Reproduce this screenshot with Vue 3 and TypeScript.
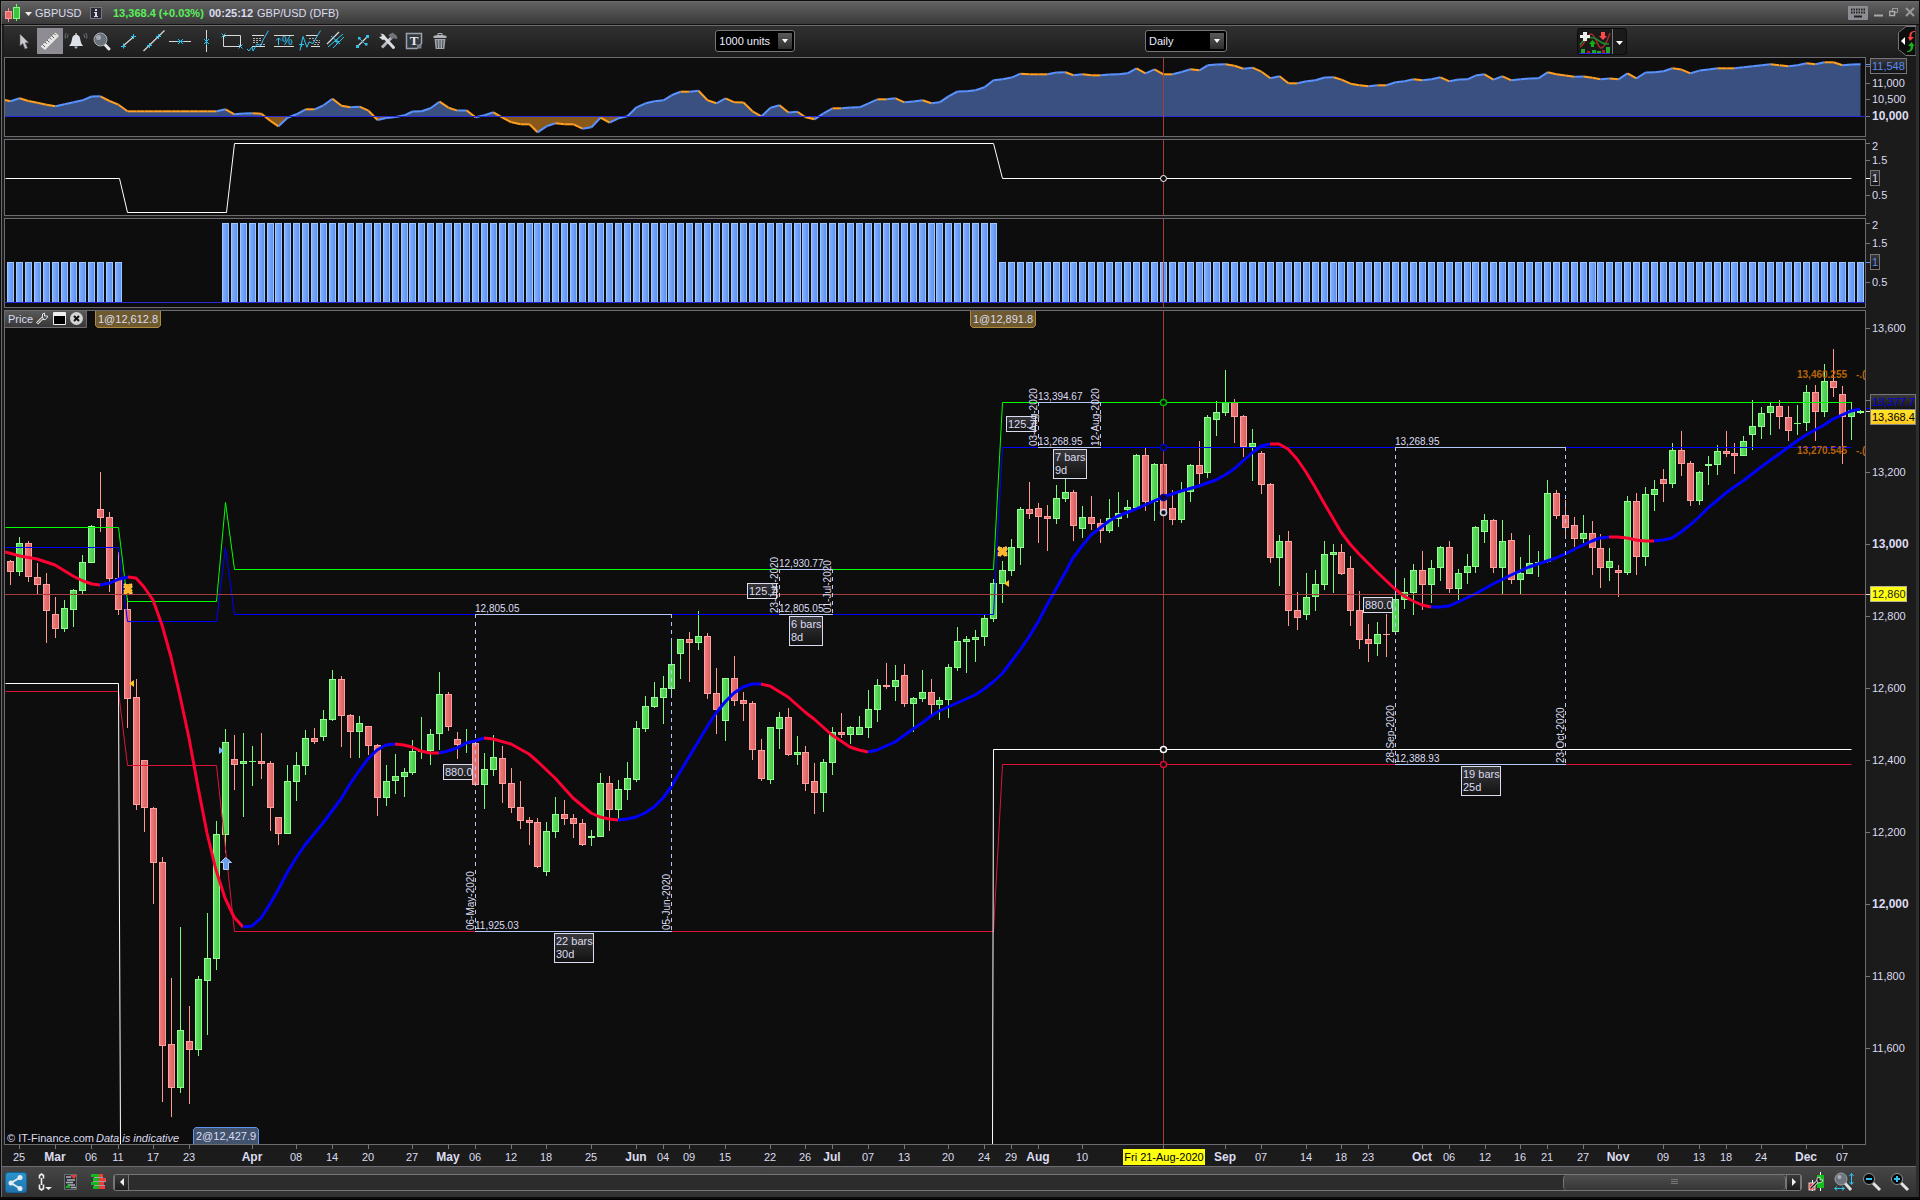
<script setup lang="ts">
type Pt = [number, number]

// Horizontal centre of the bar with the given index.
const barX = (i: number): number => 10.5 + Math.floor(8.9328 * i + 0.959)

const toPoints = (pts: Pt[]): string => pts.map(([x, y]) => `${x + 0.5},${y + 0.5}`).join(' ')

// One entry per session: direction, then high / body top / body bottom / low.
const rawCandles = `R560,561,572,585 G537,543,572,576 R541,543,577,582 R563,577,585,595 R573,584,611,643 R597,614,629,638 G600,608,629,632 G589,590,610,627 G555,562,591,595 G525,526,563,563
R472,509,518,532 R512,517,579,592 R552,578,610,615 R598,609,699,728 R679,697,805,810 R760,760,808,832 R807,808,863,904 R857,862,1046,1102 R978,1044,1088,1117 G927,1030,1088,1093
R1006,1041,1050,1104 G976,979,1050,1056 G913,958,981,1035 G821,834,959,970 G729,742,835,853 R735,759,765,790 G733,761,764,817 G746,761,762,786 R733,761,764,779 R761,763,808,831
R817,817,834,845 G765,781,834,834 G752,765,782,801 G730,738,766,775 R728,738,742,744 G710,719,737,741 G670,679,720,721 R676,679,716,747 R714,715,732,758 G716,723,732,758
R726,726,746,755 R744,745,798,816 G765,781,798,806 G754,776,781,794 G768,772,777,797 G740,751,773,775 G717,751,752,759 G729,734,751,765 G672,694,734,750 R692,694,727,731
R732,739,745,759 G729,743,744,753 R743,743,785,785 G753,769,785,809 G735,757,770,776 R746,758,784,803 R768,783,808,813 R781,807,821,829 R817,820,823,845 R818,822,867,868
G822,831,872,876 G797,814,832,838 R800,814,819,825 R814,818,824,838 R819,823,845,846 G830,836,838,846 G773,783,837,837 R776,783,810,831 G780,789,810,819 G762,778,790,800
G721,728,780,782 G696,706,729,732 G682,697,707,708 G676,688,698,724 G642,664,689,697 G639,639,654,679 R632,639,643,682 G611,636,643,650 R633,636,694,699 R668,693,710,734
G678,678,721,741 R656,678,701,706 R692,700,704,721 R701,703,750,760 R739,750,779,781 G727,727,780,784 G712,717,729,749 R708,717,755,756 G736,752,755,765 R746,752,784,791
R763,781,793,814 G759,762,793,812 G727,732,763,775 R713,732,735,738 G726,727,735,744 G716,727,735,735 G690,709,728,738 G679,685,710,722 R663,685,687,689 G665,680,687,701
R664,675,704,707 G697,698,704,732 G670,692,699,702 R679,692,705,715 G697,700,705,720 G664,667,700,718 G627,641,668,671 G636,639,642,673 G630,637,640,662 G615,618,637,646
G579,583,619,622 G561,570,584,603 G539,547,571,576 G507,509,548,565 R482,509,514,519 R503,508,517,543 R505,516,519,551 G485,498,519,524 G478,492,499,502 R490,492,526,541
G506,517,529,538 R496,517,524,530 R519,523,531,543 G499,518,531,533 G492,513,519,527 G500,507,510,518 G454,455,508,508 R448,455,502,511 G463,464,502,521 R452,464,514,523
R490,508,520,525 G482,491,520,523 G464,465,492,502 R441,465,474,484 G415,417,473,478 G401,412,420,436 G370,402,413,416 R399,402,417,443 R415,416,447,457 G429,443,447,481
R451,453,485,494 R483,484,558,563 G535,541,558,586 R531,541,611,626 R592,610,618,630 G573,597,615,620 G570,584,597,611 G541,554,585,590 G544,552,555,593 R544,552,574,575
R556,568,611,626 R591,610,640,649 R624,639,644,662 G622,634,644,656 R614,634,635,657 G571,599,632,632 G578,592,600,609 G564,570,593,615 R551,570,585,610 G560,568,585,603
G546,547,568,581 R541,547,589,593 G569,573,589,600 G554,566,573,584 G526,527,567,573 G514,520,532,543 R519,520,568,573 G520,541,568,594 R533,540,580,584 G557,573,580,594
G535,563,574,574 G551,562,563,577 G480,493,562,563 R490,493,516,519 R500,515,528,536 R517,525,539,547 G515,533,539,543 R521,533,548,575 R534,548,568,588 G548,561,568,581
R565,570,573,597 G496,501,573,575 R493,501,557,575 G487,494,557,566 G480,489,495,511 R469,479,484,502 G443,450,484,488 R431,450,464,476 R461,463,501,506 G471,472,501,505
G456,464,466,485 G445,451,465,475 R431,451,454,457 R443,453,456,474 G436,441,456,456 G400,426,435,450 G407,413,427,439 G402,406,413,435 R400,406,417,429 R406,417,431,441
G405,423,424,435 G385,392,423,431 R385,392,412,441 G364,381,412,417 R349,381,388,397 R386,394,417,464 G402,410,417,440 G410,411,413,414`

interface Candle { x: number; up: boolean; high: number; top: number; bottom: number; low: number }
const candles: Candle[] = rawCandles.split(/\s+/).map((entry, i) => {
  const [high, top, bottom, low] = entry.slice(1).split(',').map(Number)
  return { x: barX(i), up: entry[0] === 'G', high, top, bottom, low }
})

// Moving average: runs of one trend direction, each continuing from the previous one.
const rawAverage: [string, string][] = [
  ['down', '5,552 20,556 37,559 55,565 73,576 83,581 92,584 100,585'],
  ['up', '100,585 110,583 119,579 128,577'],
  ['down', '128,577 136,578 144,587 153,600 162,625 171,657 180,696 189,738 198,787 207,833 216,870 225,898 234,917 243,927'],
  ['up', '243,927 252,926 261,918 270,904 278,890 287,873 296,858 305,845 323,823 341,799 350,784 359,771 368,759 377,750 386,745 395,744'],
  ['down', '395,744 404,745 412,747 421,751 430,753 439,753'],
  ['up', '439,753 448,751 457,748 466,743 475,741 484,738'],
  ['down', '484,738 493,739 511,744 529,754 537,761 555,778 573,798 591,813 600,817 609,819 618,820'],
  ['up', '618,820 627,819 636,817 645,813 654,807 663,798 671,787 680,772 698,742 707,727 716,713 725,702 734,693 743,687 752,684 761,684'],
  ['down', '761,684 770,686 788,697 805,712 814,719 832,735 850,747 859,750 868,752'],
  ['up', '868,752 877,750 886,746 895,742 913,729 922,723 931,716 939,711 948,707 957,703 966,699 975,695 984,689 993,682 1002,674 1011,662 1020,650 1029,637 1038,622 1047,605 1056,589 1065,573 1073,558 1082,546 1091,535 1100,528 1109,521 1118,516 1136,509 1154,501 1163,497 1181,491 1199,486 1207,483 1216,480 1225,475 1234,469 1243,461 1252,453 1261,446 1270,444'],
  ['down', '1270,444 1279,444 1288,449 1297,459 1306,472 1315,487 1324,503 1341,532 1350,544 1359,554 1377,572 1395,589 1404,596 1413,601 1422,605 1431,607'],
  ['up', '1431,607 1440,607 1449,606 1458,602 1475,594 1493,584 1511,575 1529,567 1538,564 1556,558 1565,554 1583,545 1592,541 1600,538 1609,537'],
  ['down', '1609,537 1618,537 1627,538 1636,540 1645,541 1654,541'],
  ['up', '1654,541 1663,540 1672,538 1681,532 1690,525 1699,517 1708,508 1726,493 1734,487 1743,481 1761,467 1779,454 1797,441 1806,435 1815,430 1824,425 1833,419 1842,415 1851,411 1860,409'],
]
const average = rawAverage.map(([trend, points]) => ({ trend, points }))

// Equity curve, one value per bar; a value that does not rise is drawn in orange.
const equity: number[] = [
  101.3, 98.3, 101, 102.7, 104.7, 106.3, 104.3, 102.3, 100.3, 96.5, 96.3, 101, 104.7,
  111.3, 111.3, 111.3, 111.3, 111.3, 111.3, 111.3, 111.3, 111.3, 111.3, 111.3,
  109.3, 114.3, 113.5, 113.3, 113.7, 121, 126.3, 117.7, 114.3, 109.3, 109.3, 105.3, 98.7, 105.7, 107.3, 106.7,
  110.7, 120, 118, 117, 115.3, 111.5, 111.3, 108.3, 101.7, 107.7, 110.6, 110.4, 117.3, 115.3, 112.3, 117.7,
  122.3, 124.3, 124.3, 132.3, 126.3, 123.3, 124.3, 124.3, 128.7, 127.3, 117.7, 122.7, 118.3, 116.3,
  107.3, 103.3, 101.3, 100.3, 95.3, 91.7, 91.7, 90.7, 100.3, 103.3, 98.3, 102.3, 102.5, 111.3, 116.3,
  107.7, 105.3, 112.5, 111.7, 117.3, 119.3, 113.3, 108.3, 108.3, 107.5, 107.3, 103.3, 99.3, 99.3, 98.3,
  102.3, 101.6, 100.3, 103.3, 102.3, 96.3, 91.5, 91.3, 90.3, 87.3, 80.3, 79.3, 77.6, 73.7, 74.3, 74.3, 74.3,
  72.5, 72.3, 75.3, 74.3, 75.3, 75.3, 74.6, 74.3, 73.3, 68.3, 73.3, 69.3, 74.3, 74.3, 72, 69.3, 70.3,
  65.3, 64.5, 64.3, 65.7, 68.7, 67.7, 71.7, 78.3, 76.3, 83.3, 83.3, 81.3, 80.3, 77.5, 77.3,
  79.6, 83.7, 85.3, 86.3, 85.3, 85.3, 82.3, 81.3, 79.3, 80.3, 79.3, 77.3, 81.3, 79.5, 79.3, 75.6, 74.3,
  79.6, 76.3, 80.3, 79.3, 78.5, 78.3, 72.3, 74.3, 75.6, 76.7, 76.5, 77.7, 79.3, 78.6, 79.3, 73.3, 78.3,
  72.5, 72.3, 71.3, 68.3, 69.6, 73.3, 70.6, 69.6, 68.3, 68.3, 68.3, 67.3, 66.3, 65.3, 64.3,
  65.3, 66.3, 65.3, 63.3, 64.3, 62.3, 62.3, 65.3, 64.5, 64.3,
]
const equityPts: Pt[] = [[5, 100], ...equity.map((y, i): Pt => [barX(i), y])]
const equityArea = `5,116.5 ${equityPts.map(p => p.join(',')).join(' ')} ${barX(equity.length - 1)},116.5`
const equitySegs = equityPts.slice(1).map(([x, y], i) => {
  const [px, py] = equityPts[i]
  return { d: `M${px} ${py}L${x} ${y}`, falling: y >= py }
})

const histogram = Array.from({ length: 208 }, (_, i) => ({
  x: barX(i),
  top: i >= 24 && i <= 110 ? 223 : 262,
  shown: i <= 12 || i >= 24,
})).filter(b => b.shown)

const positionLine = toPoints([[5, 178], [119, 178], [127, 212], [226, 212], [234, 143], [993, 143], [1002, 178], [1851, 178]])

const levels: { tone: string; points: string }[] = [
  { tone: 'green', points: toPoints([[5, 527], [118, 527], [127, 601], [216, 601], [225, 502], [234, 569], [993, 569], [1002, 402], [1851, 402]]) },
  { tone: 'blue', points: toPoints([[5, 547], [118, 547], [127, 621], [216, 621], [225, 547], [234, 614], [993, 614], [1002, 447], [1851, 447]]) },
  { tone: 'crimson', points: toPoints([[5, 691], [118, 691], [127, 765], [216, 765], [234, 931], [993, 931], [1002, 764], [1851, 764]]) },
  { tone: 'white', points: toPoints([[5, 683], [118, 683], [120, 1144]]) },
  { tone: 'white', points: toPoints([[992, 1144], [993, 749], [1851, 749]]) },
]

const measures = [
  { x1: 475, x2: 671, y1: 614, y2: 931, high: '12,805.05', low: '11,925.03', from: '06-May-2020', to: '05-Jun-2020', diff: '880.0', dx: 443, dy: 764, bars: '22 bars', days: '30d', bx: 554, bw: 40 },
  { x1: 779, x2: 832, y1: 569, y2: 614, high: '12,930.77', low: '12,805.05', from: '23-Jun-2020', to: '01-Jul-2020', diff: '125.7', dx: 747, dy: 583, bars: '6 bars', days: '8d', bx: 789, bw: 34 },
  { x1: 1038, x2: 1100, y1: 402, y2: 447, high: '13,394.67', low: '13,268.95', from: '03-Aug-2020', to: '12-Aug-2020', diff: '125.7', dx: 1006, dy: 416, bars: '7 bars', days: '9d', bx: 1053, bw: 34 },
  { x1: 1395, x2: 1565, y1: 447, y2: 764, high: '13,268.95', low: '12,388.93', from: '28-Sep-2020', to: '23-Oct-2020', diff: '880.0', dx: 1363, dy: 597, bars: '19 bars', days: '25d', bx: 1461, bw: 40 },
]

const circles = [
  { y: 402, c: '#00b400' }, { y: 447, c: '#0000c8' }, { y: 497, c: '#0000a0' },
  { y: 512, c: '#d8d8f0' }, { y: 749, c: '#ffffff' }, { y: 764, c: '#d01030' },
]

const priceTicks = [
  { y: 328, t: '13,600', b: false }, { y: 400, t: '', b: false }, { y: 472, t: '13,200', b: false },
  { y: 544, t: '13,000', b: true }, { y: 616, t: '12,800', b: false }, { y: 688, t: '12,600', b: false },
  { y: 760, t: '12,400', b: false }, { y: 832, t: '12,200', b: false }, { y: 904, t: '12,000', b: true },
  { y: 976, t: '11,800', b: false }, { y: 1048, t: '11,600', b: false },
]

const dates = ('25@19 Mar@55 06@91 11@118 17@153 23@189 Apr@252 08@296 14@332 20@368 27@412 May@448 06@475 12@511 18@546 25@591 ' +
  'Jun@636 04@663 09@689 15@725 22@770 26@805 Jul@832 07@868 13@904 20@948 24@984 29@1011 Aug@1038 10@1082 Sep@1225 07@1261 ' +
  '14@1306 18@1341 23@1368 Oct@1422 06@1449 12@1485 16@1520 21@1547 27@1583 Nov@1618 09@1663 13@1699 18@1726 24@1761 Dec@1806 07@1842')
  .split(' ').map(s => {
    const [text, x] = s.split('@')
    return { text, x: Number(x), month: text.length === 3 }
  })

const tags = [
  { x: 95, t: '1@12,612.8' },
  { x: 970, t: '1@12,891.8' },
]
</script>

<template>
  <div class="window">
    <header class="titlebar">
      <button class="plain symbol" aria-label="Choose instrument">
        <svg width="30" height="20" viewBox="0 0 30 20">
          <path d="M3.500 5V19" stroke="#f88" />
          <path d="M11.500 1V18" stroke="#6f6" />
          <rect x="0.500" y="8.500" width="6" height="7" fill="#e86a6a" stroke="#ff9a9a" />
          <rect x="8.500" y="4.500" width="6" height="11" fill="#3fc23f" stroke="#7dff7d" />
          <path d="M20 9h7l-3.500 4z" fill="#eee" />
        </svg>
      </button>
      <span class="ticker">GBPUSD</span>
      <button class="plain info" aria-label="Instrument information">
        <svg width="12" height="12" viewBox="0 0 12 12"><rect x="0.500" y="0.500" width="11" height="11" fill="#2b2b33" stroke="#77777f" /><path d="M5 2h2v2H5zM4 5h3v4h1v1H4V9h1V6H4z" fill="#d8d8e8" /></svg>
      </button>
      <strong class="quote">13,368.4 (+0.03%)</strong>
      <strong class="clock">00:25:12</strong>
      <span class="name">GBP/USD (DFB)</span>
      <div class="winctl">
        <button class="plain" aria-label="Keyboard"><svg width="20" height="15" viewBox="0 0 20 15"><rect width="20" height="14" rx="1" fill="#8e8c92" /><path d="M3 3.500h14M3 6.500h14" stroke="#222" stroke-width="2" stroke-dasharray="1.500 1" /><path d="M6 10.500h8" stroke="#222" stroke-width="2" /></svg></button>
        <button class="plain" aria-label="Minimise"><svg width="9" height="15" viewBox="0 0 9 15"><path d="M0 9.500h9" stroke="#aaa" stroke-width="2" /></svg></button>
        <button class="plain" aria-label="Restore"><svg width="10" height="15" viewBox="0 0 10 15"><path d="M3.500 5V2.500h5v4H6M3 2.500h6" fill="none" stroke="#999" /><rect x="0.500" y="5.500" width="5" height="4" fill="none" stroke="#aaa" stroke-width="1.500" /></svg></button>
        <button class="plain" aria-label="Close"><svg width="10" height="15" viewBox="0 0 10 15"><path d="M1 2l8 8M9 2l-8 8" stroke="#999" stroke-width="2" /></svg></button>
      </div>
    </header>

    <main class="body">
      <nav class="toolbar" aria-label="Drawing tools">
        <div class="tools">
          <button class="tool" aria-label="Pointer"><svg viewBox="0 0 26 26"><path d="M9 6v12l2.800-2.500L14 21l2.500-1-2.300-5.200h3.600z" fill="#c8cace" stroke="#55585e" stroke-width="0.600" /></svg></button>
          <button class="tool active" aria-label="Ruler"><svg viewBox="0 0 26 26"><path d="M3 18.500L18.500 4l4 4L8 22.500z" fill="#e4e7e4" stroke="#777" stroke-width="0.700" /><path d="M5.500 16.500l2.500 2.500M8 14l1.800 1.800M10 12l2.500 2.500M12.500 9.700l1.800 1.800M14.600 7.600l2.500 2.500M17 5.500l1.800 1.800" stroke="#555" stroke-width="0.900" /></svg></button>
          <button class="tool" aria-label="Alert"><svg viewBox="0 0 26 26"><path d="M6 18c2-2 2.500-4 3-7 .4-2.500 1.500-4 3.500-4.300V5h1.200v1.700c2 .3 3.100 1.800 3.500 4.300.5 3 1 5 3 7z" fill="#dde1e8" /><path d="M11 18.500h4l-2 2.500z" fill="#b8bcc4" /><path d="M5.500 6c-1 1-1.300 2.500-1.200 4M3.300 5C2 6.500 1.800 8.500 2.500 10.500M20.500 6c1 1 1.300 2.500 1.200 4M22.700 5c1.300 1.500 1.500 3.500.8 5.500" fill="none" stroke="#70757d" /></svg></button>
          <button class="tool" aria-label="Zoom"><svg viewBox="0 0 26 26"><path d="M15 15.500l5 5.500" stroke="#e8e8e8" stroke-width="3" stroke-linecap="round" /><circle cx="11.500" cy="11.500" r="6.500" fill="#69717a" stroke="#a8adb3" /><circle cx="9.500" cy="9.500" r="2.500" fill="#a4abb3" /></svg></button>
          <button class="tool" aria-label="Segment"><svg viewBox="0 0 26 26"><path d="M8 18L19 8.500" stroke="#d8d8d8" stroke-width="1.200" /><path class="cy" d="M8.500 15.500v5M6 18.500h5M18.500 6v5M16 8.500h5" /></svg></button>
          <button class="tool" aria-label="Line"><svg viewBox="0 0 26 26"><path d="M2.500 23L23.500 2.500" stroke="#d8d8d8" stroke-width="1.200" /><path class="cy" d="M8.500 15v5M6 17.500h5M17.500 6v5M15 8.500h5" /></svg></button>
          <button class="tool" aria-label="Horizontal line"><svg viewBox="0 0 26 26"><path d="M2 13.500h22" stroke="#d8d8d8" /><path class="cy" d="M11 11l5 5M16 11l-5 5M10.500 13.500h6" /></svg></button>
          <button class="tool" aria-label="Vertical line"><svg viewBox="0 0 26 26"><path d="M13.500 2v22" stroke="#d8d8d8" /><path class="cy" d="M11 11l5 5M16 11l-5 5M13.500 11v6" /></svg></button>
          <button class="tool" aria-label="Rectangle"><svg viewBox="0 0 26 26"><path d="M4.500 7.500h17v11h-17z" fill="none" stroke="#d8d8d8" /><path class="cy" d="M2.500 5.500l4 4M6.500 5.500l-4 4M19.500 16.500l4 4M23.500 16.500l-4 4" /></svg></button>
          <button class="tool" aria-label="Trend report"><svg viewBox="0 0 26 26"><path d="M7 7.500h12M7 18.500h13" stroke="#ddd" /><path d="M8 10.500h9M8 12.500h8M8 14.500h5M15 16.500h5" stroke="#aaa" stroke-dasharray="2 1" /><path class="cy" d="M2 21l2 2 3-4 1 4 4-7 4 1.500L18 12l5.500-9.500" /></svg></button>
          <button class="tool" aria-label="Percent change"><svg viewBox="0 0 26 26"><path d="M3 7.500h20M3 18.500h20" stroke="#d8d8d8" /><path class="cy" d="M7.500 17V10M5 12.500L7.500 10l2.500 2.500" /><text x="11" y="17" class="pct">%</text></svg></button>
          <button class="tool" aria-label="Pattern report"><svg viewBox="0 0 26 26"><path d="M9 7.500h12M14 18.500h9" stroke="#ddd" /><path d="M12 10.500h7M16 12.500h7M18 14.500h5M17 16.500h6" stroke="#aaa" stroke-dasharray="2 1" /><path class="cy" d="M3 22.500l3-14 4 11M10 19l2-5 4 1.500L18.500 11l5-8.500M2 16.500h5M4.500 14v5" /></svg></button>
          <button class="tool" aria-label="Channel"><svg viewBox="0 0 26 26"><path d="M4 16L16 4" stroke="#d8d8d8" stroke-width="1.200" /><path class="cy" d="M5 19L20 6M10 20L21 9M8 8l9 8M14 11v5M11.500 13.500h5" /></svg></button>
          <button class="tool" aria-label="Scatter"><svg viewBox="0 0 26 26"><path d="M8 19L19 8" stroke="#d8d8d8" stroke-width="1.200" /><path d="M17 7h3v3h-3zM7 17h3v3H7zM9 9h2.500v2.500H9zM16 15h2.500v2.500H16z" fill="#2fc4f2" /><path class="cy" d="M10 10l7 7" /></svg></button>
          <button class="tool" aria-label="Settings"><svg viewBox="0 0 26 26"><path d="M7 19.500L18 8" stroke="#b5b9bf" stroke-width="3" /><path d="M8 8l10.500 11.500" stroke="#dadde2" stroke-width="3" stroke-linecap="round" /><path d="M5 5.500l3 .5 2 2 .5 3-3 1-3.500-3 2.500-.5 1-1z" fill="#dadde2" /><path d="M13.500 7l4-2.500 4 3 1 3-2 .5-2-1-1.500 1.500z" fill="#70757c" /></svg></button>
          <button class="tool" aria-label="Text"><svg viewBox="0 0 26 26"><path d="M5.500 5.500h15v10l-4.500 5H5.500z" fill="#33383f" stroke="#9aa3ad" stroke-width="1.500" /><path d="M16 20.500v-4h4.500v4z" fill="#777f88" /><text x="13" y="17" class="tee">T</text></svg></button>
          <button class="tool" aria-label="Delete"><svg viewBox="0 0 26 26"><path d="M11 5.500h4v2h-4z" fill="none" stroke="#aeb4ba" /><path d="M6.500 8c1-1.500 12-1.500 13 0v2h-13z" fill="#aeb4ba" /><path d="M7.500 11h11l-1.200 10H8.700z" fill="#9fa5ab" /><path d="M10 12l.5 8M13 12v8M16 12l-.5 8" stroke="#484c50" /></svg></button>
        </div>
        <span class="space-3"></span>
        <span class="picker units">
          <select aria-label="Number of units"><option>1000 units</option></select>
          <svg class="drop" width="14" height="16" viewBox="0 0 14 16"><path d="M4 6h6l-3 4z" fill="#fff" /></svg>
        </span>
        <span class="space-4"></span>
        <span class="picker period">
          <select aria-label="Timeframe"><option>Daily</option></select>
          <svg class="drop" width="14" height="16" viewBox="0 0 14 16"><path d="M4 6h6l-3 4z" fill="#fff" /></svg>
        </span>
        <span class="space-4"></span>
        <div class="indicators">
          <button class="plain" aria-label="Add indicator">
            <svg width="34" height="25" viewBox="0 0 34 25">
              <path d="M2 18c5-3 7-12 11-13 5 1 6 13 10 14 3 0 6-6 9-15" fill="none" stroke="#a52a2a" stroke-width="1.500" />
              <path d="M2 16c5-8 9-8 14-7s6 7 15 6" fill="none" stroke="#1f8a2a" stroke-width="1.500" />
              <path d="M3 20h4v4H3zM14 21h4v3h-4zM19 22h4v2h-4zM28 18h4v6h-4z" fill="#1fa82a" /><path d="M9 22h3v2H9zM24 21h3v3h-3z" fill="#b02020" />
              <path d="M1 24.500h31" stroke="#2a2ae0" />
              <path d="M5 3h4v3h3v3H9v3H5V9H2V6h3z" fill="#eee" />
              <path d="M23 3h4v4h2l-4 4-4-4h2z" fill="#ff4a4a" /><path d="M13 18v-3h-2l3.500-4 3.500 4h-2v3z" fill="#12b012" />
            </svg>
          </button>
          <button class="plain more" aria-label="More indicators"><svg width="13" height="25" viewBox="0 0 13 25"><path d="M3 12h7l-3.500 4z" fill="#fff" /></svg></button>
        </div>
        <span class="space-3"></span>
        <button class="plain corner" aria-label="Open trade panel">
          <svg width="18" height="30" viewBox="0 0 18 30">
            <path d="M18 0.500H8L0.500 6.500v17L8 29.500h10z" fill="#0d0d0d" stroke="#77747a" />
            <path d="M3 15l4-4v8z" fill="#fff" /><path d="M17 6c-3 0-4 2-3.500 5H16l-4 4-2-4h1.500C11 7 13 5 17 5z" fill="#ff4444" /><path d="M9 25c3 0 4-2 3.500-5H10l3.500-4 3 4H15c.5 4-2 6-6 6z" fill="#18b818" />
          </svg>
        </button>
      </nav>

      <svg class="panel" viewBox="4 57 1912 82" role="img" aria-label="Equity">
        <defs>
          <clipPath id="above"><rect x="5" y="58" width="1860" height="58" /></clipPath>
          <clipPath id="below"><rect x="5" y="117" width="1860" height="19" /></clipPath>
          <linearGradient id="boxfill" x2="0" y2="1"><stop offset="0" stop-color="#3a3a3e" /><stop offset="1" stop-color="#111" /></linearGradient>
          <linearGradient id="tabfill" x2="0" y2="1"><stop offset="0" stop-color="#5c5c5c" /><stop offset="1" stop-color="#363636" /></linearGradient>
          <linearGradient id="barfill"><stop offset="0" stop-color="#86b0ff" /><stop offset="1" stop-color="#5a90f0" /></linearGradient>
          <linearGradient id="upfill"><stop offset="0" stop-color="#66e266" /><stop offset="1" stop-color="#46c446" /></linearGradient>
          <linearGradient id="downfill"><stop offset="0" stop-color="#f47c7c" /><stop offset="1" stop-color="#d66060" /></linearGradient>
          <linearGradient id="gold" x2="0" y2="1"><stop offset="0" stop-color="#ffe62a" /><stop offset="1" stop-color="#ffc81e" /></linearGradient>
        </defs>
        <rect class="plot" x="4.500" y="57.500" width="1861" height="79" />
        <polygon :points="equityArea" fill="#395080" clip-path="url(#above)" />
        <polygon :points="equityArea" fill="#88581a" clip-path="url(#below)" />
        <path v-for="(s, i) in equitySegs" :key="i" :d="s.d" :stroke="s.falling ? '#ffa020' : '#5a92ff'" stroke-width="2" />
        <path d="M5 116.500H1866" stroke="#2a2ad8" />
        <path class="hair" d="M1163.500 58V136" />
        <path class="tick" d="M1866 66.500h4M1866 83.500h4M1866 99.500h4M1866 116.500h4" />
        <path d="M1866 64.500h4" stroke="#5a92ff" />
        <rect x="1870.500" y="58.500" width="36" height="15" fill="url(#boxfill)" stroke="#77747a" />
        <text class="ax" x="1872" y="70" fill="#5a8cf0">11,548</text>
        <text class="ax" x="1872" y="87">11,000</text>
        <text class="ax" x="1872" y="103">10,500</text>
        <text class="ax b" x="1872" y="120">10,000</text>
      </svg>

      <svg class="panel" viewBox="4 139 1912 79" role="img" aria-label="Position">
        <rect class="plot" x="4.500" y="139.500" width="1861" height="76" />
        <polyline :points="positionLine" fill="none" stroke="#fff" />
        <path class="hair" d="M1163.500 140V215" />
        <circle cx="1163.500" cy="178.500" r="3" fill="#0d0d0d" stroke="#fff" />
        <path class="tick" d="M1866 143.500h4M1866 160.500h4M1866 195.500h4" /><path d="M1866 178.500h4" stroke="#fff" />
        <rect x="1870.500" y="170.500" width="9" height="15" fill="url(#boxfill)" stroke="#77747a" />
        <text class="ax" x="1872" y="150">2</text>
        <text class="ax" x="1872" y="164">1.5</text>
        <text class="ax" x="1872" y="182">1</text>
        <text class="ax" x="1872" y="199">0.5</text>
      </svg>

      <svg class="panel" viewBox="4 218 1912 92" role="img" aria-label="Position histogram">
        <rect class="plot" x="4.500" y="218.500" width="1861" height="89" />
        <g stroke="#9cc8ff">
          <rect v-for="b in histogram" :key="b.x" :x="b.x - 3" :y="b.top + 0.5" width="6" :height="302 - b.top" fill="url(#barfill)" />
        </g>
        <path d="M5 302.500H1866" stroke="#2a2ad8" />
        <path class="hair" d="M1163.500 219V307" />
        <path class="tick" d="M1866 223.500h4M1866 243.500h4M1866 282.500h4" /><path d="M1866 262.500h4" stroke="#5a92ff" />
        <rect x="1870.500" y="254.500" width="9" height="15" fill="url(#boxfill)" stroke="#77747a" />
        <text class="ax" x="1872" y="229">2</text>
        <text class="ax" x="1872" y="247">1.5</text>
        <text class="ax" x="1872" y="266" fill="#5a8cf0">1</text>
        <text class="ax" x="1872" y="286">0.5</text>
      </svg>

      <svg class="panel" viewBox="4 310 1912 856" role="img" aria-label="GBPUSD daily price">
        <defs><clipPath id="price"><rect x="5" y="311" width="1860" height="833" /></clipPath></defs>
        <rect class="plot" x="4.500" y="310.500" width="1861" height="834" />
        <g clip-path="url(#price)">
          <g v-for="c in candles" :key="c.x" :class="c.up ? 'up' : 'down'">
            <path :d="`M${c.x} ${c.high}V${c.low}`" />
            <rect v-if="c.bottom - c.top > 1" :x="c.x - 3" :y="c.top + 0.5" width="6" :height="c.bottom - c.top - 1" />
            <path v-else :d="`M${c.x - 3.5} ${c.top + 0.5}h7`" />
          </g>
          <polyline v-for="(l, i) in levels" :key="i" :class="['level', l.tone]" :points="l.points" />

          <path d="M124 584h3l1 2 1-2h3v4l-2 1 2 1v4h-3l-1-2-1 2h-3v-4l2-1-2-1z" fill="#ffb42a" stroke="#ffd35a" stroke-dasharray="2 1" />
          <path d="M998 547h3l1.500 2 1.500-2h3v3.500l-2 1 2 1V556h-3l-1.500-2-1.500 2h-3v-3.500l2-1-2-1z" fill="#ffb42a" stroke="#ffd35a" stroke-dasharray="2 1" />
          <path d="M134 680v7l-5-3.500zM1009 580v7l-5-3.500z" fill="#ffc21e" />
          <path d="M219 747v7l5-3.500z" fill="#7db4ff" />
          <path d="M225.500 857.500l-5 5h3v7h5v-7h3z" fill="#6a9cf0" stroke="#b4d4ff" />

          <polyline v-for="(s, i) in average" :key="'a' + i" :class="['ma', s.trend]" :points="s.points" />
          <path class="hair" d="M1163.500 311V1144M5 594.500H1866" />
          <circle v-for="c in circles" :key="c.y" cx="1163.500" :cy="c.y + 0.5" r="3" fill="#0d0d0d" :stroke="c.c" stroke-width="1.500" />

          <text class="stop" x="1797" y="378">13,460.255</text><text class="stop" x="1856" y="378">-.(</text>
          <text class="stop" x="1797" y="454">13,270.545</text><text class="stop" x="1856" y="454">-.(</text>

          <g v-for="m in measures" :key="m.from">
            <rect :x="m.dx + 0.5" :y="m.dy + 0.5" width="29" height="15" class="tip" />
            <text class="ax" :x="m.dx + 2" :y="m.dy + 12">{{ m.diff }}</text>
            <path class="edge" :d="`M${m.x1} ${m.y1 + 0.5}H${m.x2 + 1}M${m.x1} ${m.y2 + 0.5}H${m.x2 + 1}`" />
            <path class="edge dash" :d="`M${m.x1 + 0.5} ${m.y1}V${m.y2}M${m.x2 + 0.5} ${m.y1}V${m.y2}`" />
            <text class="small" :x="m.x1" :y="m.y1 - 2">{{ m.high }}</text>
            <text class="small" :x="m.x1" :y="m.y2 - 2">{{ m.low }}</text>
            <text class="small" :transform="`translate(${m.x1 - 1} ${m.y2 - 1}) rotate(-90)`">{{ m.from }}</text>
            <text class="small" :transform="`translate(${m.x2 - 1} ${m.y2 - 1}) rotate(-90)`">{{ m.to }}</text>
            <rect :x="m.bx + 0.5" :y="m.y2 + 2.5" :width="m.bw - 1" height="29" class="tip" />
            <text class="ax" :x="m.bx + 2" :y="m.y2 + 14">{{ m.bars }}</text>
            <text class="ax" :x="m.bx + 2" :y="m.y2 + 27">{{ m.days }}</text>
          </g>

          <g v-for="t in tags" :key="t.t">
            <path :d="`M${t.x + 0.5} 310V325.5l2 2h61l2-2V310`" fill="#6e5a2e" stroke="#b08a3c" />
            <text class="ax" :x="t.x + 3" y="323">{{ t.t }}</text>
          </g>
          <path d="M193.500 1145V1129.500l2-2h61l2 2V1145" fill="#42536e" stroke="#5f94f0" />
          <text class="ax" x="196" y="1140">2@12,427.9</text>
          <text class="ax" x="7" y="1142">© IT-Finance.com</text>
          <text class="ax it" x="96" y="1142">Data is indicative</text>

          <path d="M4 310h82.500v17.500H4z" fill="url(#tabfill)" stroke="#6e6b70" />
          <text class="ax" x="8" y="323">Price</text>
          <path d="M37 323.500l6-6" stroke="#ddd" stroke-width="3" /><path d="M37 323.500l6-6" stroke="#333" />
          <path d="M42.500 318v-4l2-1v3h3v1l-2 2.500h-2.500" fill="none" stroke="#ddd" />
          <rect x="53" y="312" width="13" height="13" rx="1" fill="#f0f0f0" /><rect x="54" y="316" width="11" height="8" fill="#000" />
          <circle cx="76.500" cy="318.500" r="6.500" fill="#d4d4d4" /><path d="M74 316l5 5M79 316l-5 5" stroke="#111" stroke-width="2" />
        </g>

        <g v-for="p in priceTicks" :key="p.y">
          <path class="tick" :d="`M1866 ${p.y + 0.5}h4`" />
          <text :class="['ax', { b: p.b }]" x="1872" :y="p.y + 4">{{ p.t }}</text>
        </g>
        <path d="M1866 408.500h4" stroke="#00f" /><path d="M1866 411.500h4M1866 594.500h4" stroke="#ddd" />
        <rect x="1870.500" y="394.500" width="45" height="15" fill="url(#boxfill)" stroke="#77747a" />
        <text class="ax" x="1872" y="406" fill="#0000e0">13,377.7</text>
        <rect x="1870.500" y="409.500" width="45" height="15" fill="url(#gold)" stroke="#88858a" />
        <text class="ax" x="1872" y="421" fill="#000">13,368.4</text>
        <rect x="1870.500" y="586.500" width="36" height="15" fill="#ffff10" stroke="#b8b49a" />
        <text class="ax" x="1872" y="598" fill="#222">12,860</text>

        <g v-for="d in dates" :key="d.x">
          <path class="tick" :d="`M${d.x + 0.5} 1145v4`" />
          <text :class="['ax', 'mid', { b: d.month }]" :x="d.x" y="1161">{{ d.text }}</text>
        </g>
        <path class="tick" d="M1163.500 1145v4" />
        <rect x="1123" y="1149" width="82" height="16" fill="#ffff10" />
        <text class="ax mid" x="1164" y="1161" fill="#000">Fri 21-Aug-2020</text>
      </svg>
    </main>

    <footer class="bottom">
      <button class="share" aria-label="Share"><svg width="22" height="20" viewBox="0 0 22 20"><path d="M15 4.500L6 10l9 5.500" fill="none" stroke="#dfe8ee" stroke-width="2" /><circle cx="15" cy="4.500" r="2.500" fill="#e4ecf2" /><circle cx="6" cy="10" r="2.500" fill="#e4ecf2" /><circle cx="15" cy="15.500" r="2.500" fill="#e4ecf2" /></svg></button>
      <button class="plain foot" aria-label="Link charts"><svg width="16" height="18" viewBox="0 0 16 18"><path d="M2.500 5.500v-3l2-1.500 2 1.500v3M2.500 11.500v4l2 1.500 2-1.500v-4M4.500 5v7" fill="none" stroke="#eee" stroke-width="1.600" /><path d="M8 14h7l-3.500 3z" fill="#eee" /></svg></button>
      <button class="plain foot" aria-label="Order list"><svg width="16" height="18" viewBox="0 0 16 18"><rect x="1.500" y="1.500" width="12" height="15" fill="#2c3036" stroke="#66686d" /><path d="M3 4h5M4 7h8M3 9.500h7M5 12h7M8 14.500h5" stroke="#aab0b8" stroke-width="1.500" /><path d="M7 2h7l-3 4z" fill="#e33c3c" /><path d="M2 15l3-4 3 4z" fill="#1fae2a" /></svg></button>
      <button class="plain foot wide" aria-label="Order book"><svg width="18" height="18" viewBox="0 0 18 18"><path d="M1 1h8v3H1zM3 5h6v3H3zM1 9h8v3H1zM3 13h6v3H3z" fill="#12b81c" /><path d="M9 1h4v3H9zM9 5h7v3H9zM9 9h5v3H9zM9 13h6v3H9z" fill="#ee3c3c" /><path d="M4 4.500h9M3 8.500h13M4 12.500h11" stroke="#d8c8c8" stroke-width="0.700" /></svg></button>
      <div class="scroll" role="scrollbar" aria-label="History" aria-controls="app" aria-valuenow="100">
        <button class="arrow" aria-label="Scroll back"><svg width="8" height="8" viewBox="0 0 8 8"><path d="M6 0v8L2 4z" fill="#eee" /></svg></button>
        <span class="track"></span>
        <span class="thumb"><svg width="7" height="6" viewBox="0 0 7 6"><path d="M0 0.500h7M0 2.500h7M0 4.500h7" stroke="#777" /></svg></span>
        <button class="arrow" aria-label="Scroll forward"><svg width="8" height="8" viewBox="0 0 8 8"><path d="M2 0v8l4-4z" fill="#eee" /></svg></button>
      </div>
      <div class="zooms">
        <button class="plain" aria-label="Chart style"><svg width="18" height="20" viewBox="0 0 18 20"><path d="M12.500 0v19M4.500 8v11" stroke="#fff" /><rect x="9" y="3" width="7" height="13" fill="#12c01c" /><rect x="1" y="11" width="6" height="7" fill="#e03838" stroke="#fff" stroke-width="0.800" /><path d="M3 16l7-7" stroke="#ddd" stroke-width="3" /><path d="M3 16l7-7" stroke="#111" stroke-width="1.200" /><path d="M9 9V6l3-1v3h3l-1 2-4 1z" fill="#222" stroke="#eee" stroke-width="0.800" /></svg></button>
        <button class="plain" aria-label="Fit to view"><svg width="20" height="20" viewBox="0 0 20 20"><path d="M10 10l7 8" stroke="#ddd" stroke-width="3" /><circle cx="7" cy="7" r="6" fill="#6e757c" stroke="#999fa6" /><circle cx="5.500" cy="5" r="2" fill="#a8afb6" /><path class="cy" d="M17.500 2v10M15.500 4l2-2.500 2 2.500M15.500 10l2 2.500 2-2.500M1 16.500h9M3 14.500l-2.500 2 2.500 2M8 14.500l2.500 2-2.500 2" /></svg></button>
        <button class="plain" aria-label="Zoom out"><svg width="20" height="20" viewBox="0 0 20 20"><path d="M11 11l7 7" stroke="#e4e4e4" stroke-width="3" /><circle cx="7" cy="7" r="5.500" fill="#050505" stroke="#8c9298" /><path d="M4 7h6" stroke="#2fc4f2" stroke-width="2" /></svg></button>
        <button class="plain" aria-label="Zoom in"><svg width="20" height="20" viewBox="0 0 20 20"><path d="M11 11l7 7" stroke="#e4e4e4" stroke-width="3" /><circle cx="7" cy="7" r="5.500" fill="#050505" stroke="#8c9298" /><path d="M4 7h6M7 4v6" stroke="#2fc4f2" stroke-width="2" /></svg></button>
      </div>
    </footer>
  </div>
</template>

<style>
body {
  margin: 0;
  background: #000;
}
</style>

<style scoped>
.window {
  box-sizing: border-box;
  border: 1px solid #0a0a0a;
  border-bottom-width: 2px;
  background: #2e2e2f;
  font: 11px/13px "Liberation Sans", Arial, sans-serif;
  color: #dcdcf0;
}
.titlebar {
  display: flex;
  align-items: center;
  box-sizing: border-box;
  height: 24px;
  padding: 0 4px 0 3px;
  border-top: 1px solid #6e6b70;
  border-left: 1px solid #6e6b70;
  background: linear-gradient(#626262, #383838);
  border-bottom: 1px solid #111;
}
.plain {
  display: block;
  padding: 0;
  border: 0;
  background: none;
}
.plain svg,
.tool svg,
.share svg,
.arrow svg {
  display: block;
}
.symbol {
  width: 30px;
}
.ticker {
  width: 55px;
}
.info {
  width: 23px;
}
.quote {
  width: 96px;
  color: #58f058;
  white-space: nowrap;
}
.clock {
  width: 48px;
}
.name {
  flex: 1;
}
.winctl {
  display: flex;
  gap: 6px;
}
.body {
  margin-right: 3px;
  padding-left: 2px;
  border-left: 1px solid #6e6b70;
  background: #1b1b1b;
}
.toolbar {
  display: flex;
  align-items: center;
  box-sizing: border-box;
  height: 32px;
  padding: 0 0 1px 7px;
  border-top: 1px solid #6e6b70;
  background: linear-gradient(#303030, #1c1c1c);
}
.tools {
  display: flex;
}
.tool {
  width: 26px;
  height: 26px;
  padding: 0;
  border: 0;
  background: none;
}
.tool.active {
  background: #8f8d93;
}
.cy {
  fill: none;
  stroke: #2fc4f2;
  stroke-width: 1;
}
.pct {
  font: 12px "Liberation Sans", Arial, sans-serif;
  fill: #2fc4f2;
}
.tee {
  font: bold 13px "Liberation Serif", serif;
  fill: #e8ecf0;
  text-anchor: middle;
}
.space-3 {
  flex: 3;
}
.space-4 {
  flex: 4;
}
.picker {
  position: relative;
  display: block;
  height: 22px;
}
.units {
  width: 80px;
}
.period {
  width: 82px;
}
.picker select {
  appearance: none;
  display: block;
  box-sizing: border-box;
  width: 100%;
  height: 22px;
  padding: 0 3px;
  border: 1px solid #77747a;
  border-radius: 3px;
  background: #000;
  color: #eef;
  font: inherit;
}
.drop {
  position: absolute;
  top: 3px;
  right: 3px;
  background: linear-gradient(#5a5a5a, #2e2e2e);
  pointer-events: none;
}
.indicators {
  display: flex;
  border: 1px solid #0c0c0c;
  border-radius: 3px;
  background: #1a1a1a;
}
.more {
  border-left: 1px solid #77747a;
}
.corner {
  margin-left: 9px;
}
.panel {
  display: block;
  width: 100%;
  height: auto;
}
.plot {
  fill: #0d0d0d;
  stroke: #6e6b70;
}
.tick {
  stroke: #77747a;
}
.hair {
  stroke: #a43c3c;
}
.ax {
  font: 11px "Liberation Sans", Arial, sans-serif;
}
.ax:not([fill]) {
  fill: #dcdcf0;
}
.b {
  font-size: 12px;
  font-weight: bold;
}
.it {
  font-style: italic;
}
.mid {
  text-anchor: middle;
}
.small {
  font: 10px "Liberation Sans", Arial, sans-serif;
  fill: #dcdcf0;
}
.stop {
  font: bold 10px "Liberation Sans", Arial, sans-serif;
  fill: #b86408;
}
.up path {
  stroke: #7dfa7d;
}
.up rect {
  fill: url(#upfill);
  stroke: #90ff90;
}
.down path {
  stroke: #ff9a90;
}
.down rect {
  fill: url(#downfill);
  stroke: #ffa0a0;
}
.level {
  fill: none;
}
.level.green {
  stroke: #0f0;
}
.level.blue {
  stroke: #00f;
}
.level.crimson {
  stroke: #dc143c;
}
.level.white {
  stroke: #fff;
}
.ma {
  fill: none;
  stroke-width: 3;
  stroke-linejoin: round;
}
.ma.up {
  stroke: #00f;
}
.ma.down {
  stroke: #ff0033;
}
.edge {
  fill: none;
  stroke: #b4c8ff;
}
.dash {
  stroke-dasharray: 4 4;
}
.tip {
  fill: url(#boxfill);
  stroke: #dcdcf0;
}
.bottom {
  display: flex;
  align-items: center;
  box-sizing: border-box;
  height: 31px;
  margin-right: 3px;
  padding: 0 6px 0 3px;
  border-top: 1px solid #6e6b70;
  border-left: 1px solid #6e6b70;
  background: linear-gradient(#464646, #303030);
}
.share {
  width: 22px;
  height: 21px;
  padding: 0;
  border: 1px solid #14629a;
  border-radius: 3px;
  background: linear-gradient(#2a94cc, #1f74ae);
}
.share svg {
  margin-left: -1px;
}
.foot {
  margin-left: 10px;
}
.foot.wide {
  margin-left: 11px;
}
.scroll {
  display: flex;
  flex: 1;
  box-sizing: border-box;
  height: 17px;
  margin-left: 5px;
  border: 1px solid #77747a;
  border-radius: 3px;
  background: #2c2c2c;
}
.arrow {
  display: flex;
  align-items: center;
  justify-content: center;
  width: 15px;
  padding: 0;
  border: 1px solid #77747a;
  border-width: 0 1px;
  background: linear-gradient(#3a3a3a, #1c1c1c);
}
.track {
  flex: 13;
}
.thumb {
  display: flex;
  flex: 2;
  align-items: center;
  justify-content: center;
  border: 1px solid #77747a;
  border-width: 0 1px;
  border-radius: 4px;
  background: linear-gradient(#4e4e4e, #363636);
}
.zooms {
  display: flex;
  gap: 8px;
  margin-left: 6px;
}
</style>
